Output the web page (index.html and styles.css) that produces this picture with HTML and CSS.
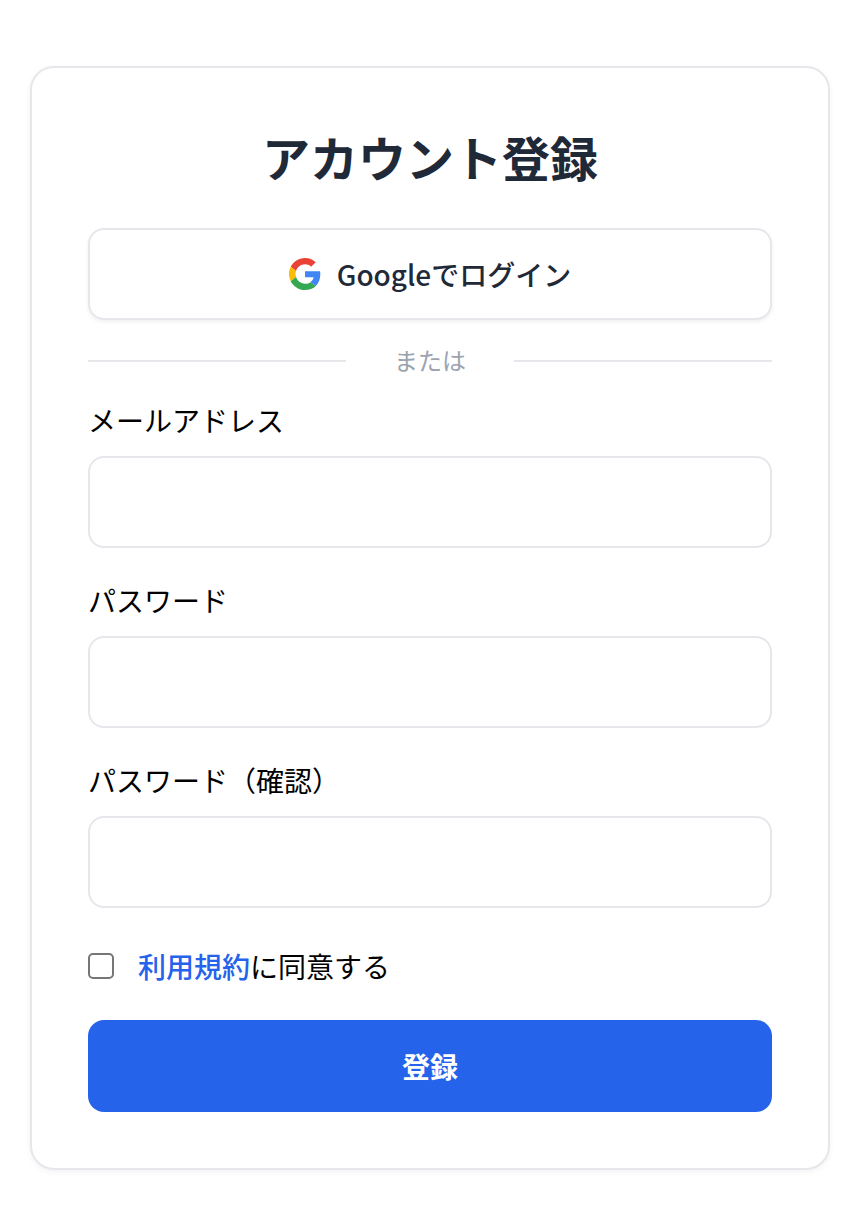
FILE: index.html
```html
<!DOCTYPE html>
<html lang="ja">
<head>
    <meta charset="UTF-8">
    <meta name="viewport" content="width=device-width, initial-scale=1.0">
    <title>アカウント登録</title>
    <link rel="stylesheet" href="styles.css">
</head>
<body>
    <div class="card">
        <h1 class="title">アカウント登録</h1>
        <button class="google" type="button">
            <svg class="google-icon" viewBox="0 0 48 48" aria-hidden="true">
                <path fill="#EA4335" d="M24 9.5c3.54 0 6.71 1.22 9.21 3.6l6.85-6.85C35.9 2.38 30.47 0 24 0 14.62 0 6.51 5.38 2.56 13.22l7.98 6.19C12.43 13.72 17.74 9.5 24 9.5z"/>
                <path fill="#4285F4" d="M46.98 24.55c0-1.57-.15-3.09-.38-4.55H24v9.02h12.94c-.58 2.96-2.26 5.48-4.78 7.18l7.73 6c4.51-4.18 7.09-10.36 7.09-17.65z"/>
                <path fill="#FBBC05" d="M10.53 28.59c-.48-1.45-.76-2.99-.76-4.59s.27-3.14.76-4.59l-7.98-6.19C.92 16.46 0 20.12 0 24c0 3.88.92 7.54 2.56 10.78l7.97-6.19z"/>
                <path fill="#34A853" d="M24 48c6.48 0 11.93-2.13 15.89-5.81l-7.73-6c-2.15 1.45-4.92 2.3-8.16 2.3-6.26 0-11.57-4.22-13.47-9.91l-7.98 6.19C6.51 42.62 14.62 48 24 48z"/>
            </svg>
            <span>Googleでログイン</span>
        </button>
        <div class="divider"><span>または</span></div>
        <form class="form">
            <div class="field">
                <label class="label" for="email">メールアドレス</label>
                <input class="input" id="email" type="email">
            </div>
            <div class="field">
                <label class="label" for="password">パスワード</label>
                <input class="input" id="password" type="password">
            </div>
            <div class="field">
                <label class="label" for="confirm">パスワード（確認）</label>
                <input class="input" id="confirm" type="password">
            </div>
            <div class="terms">
                <input class="check" id="terms" type="checkbox">
                <label for="terms"><a href="#">利用規約</a>に同意する</label>
            </div>
            <button class="submit" type="button">登録</button>
        </form>
    </div>
</body>
</html>
```

FILE: styles.css
```css
* {
    padding: 0;
    margin: 0;
    box-sizing: border-box;
}

body {
    background: #fff;
    padding: 66px 30px 58px;
    font-family: "Noto Sans CJK JP", "Noto Sans", sans-serif;
    color: #000;
}

.card {
    height: 1104px;
    padding: 56px 56px 0;
    background: #fff;
    border: 2px solid #e5e7eb;
    border-radius: 24px;
    box-shadow: 0 2px 6px rgba(0, 0, 0, 0.05);
}

.title {
    height: 68px;
    margin-bottom: 36px;
    font-size: 48px;
    line-height: 64px;
    font-weight: 700;
    text-align: center;
    color: #1f2937;
}

.google {
    display: flex;
    align-items: center;
    justify-content: center;
    gap: 16px;
    width: 100%;
    height: 92px;
    background: #fff;
    border: 2px solid #e5e7eb;
    border-radius: 16px;
    box-shadow: 0 2px 4px rgba(0, 0, 0, 0.06);
    font-family: inherit;
    font-size: 28px;
    font-weight: 500;
    color: #1f2937;
}

.google-icon {
    width: 32px;
    height: 32px;
}

.divider {
    display: flex;
    align-items: center;
    gap: 48px;
    height: 40px;
    margin: 21px 0 19px;
    font-size: 24px;
    color: #9ca3af;
}

.divider span {
    margin-bottom: 4px;
}

.divider::before,
.divider::after {
    content: "";
    flex: 1;
    height: 2px;
    background: #e5e7eb;
}

.field {
    height: 180px;
}

.label {
    display: block;
    height: 56px;
    font-size: 28px;
    line-height: 40px;
}

.input {
    display: block;
    width: 100%;
    height: 92px;
    background: #fff;
    border: 2px solid #e5e7eb;
    border-radius: 16px;
}

.terms {
    display: flex;
    align-items: center;
    gap: 24px;
    height: 40px;
    margin-top: 6px;
    font-size: 28px;
}

.check {
    appearance: none;
    width: 26px;
    height: 26px;
    background: #fff;
    border: 2px solid #767676;
    border-radius: 5px;
}

.terms a {
    color: #2563eb;
    font-weight: 500;
    text-decoration: none;
}

.submit {
    display: block;
    width: 100%;
    height: 92px;
    margin-top: 34px;
    background: #2563eb;
    border: 0;
    border-radius: 16px;
    font-family: inherit;
    font-size: 28px;
    font-weight: 700;
    color: #fff;
}
```
